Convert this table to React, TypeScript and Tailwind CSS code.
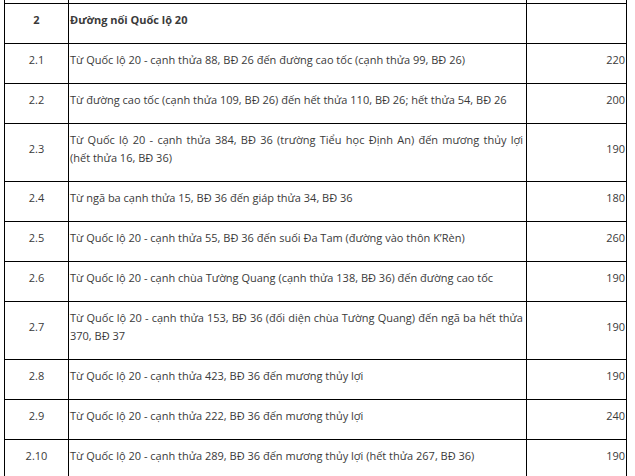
import React from 'react';

type Row = { no: string; lines: string[]; price?: string; bold?: boolean };

const rows: Row[] = [
    { no: '2', lines: ['Đường nối Quốc lộ 20'], bold: true },
    { no: '2.1', lines: ['Từ Quốc lộ 20 - cạnh thửa 88, BĐ 26 đến đường cao tốc (cạnh thửa 99, BĐ 26)'], price: '220' },
    {
        no: '2.2',
        lines: ['Từ đường cao tốc (cạnh thửa 109, BĐ 26) đến hết thửa 110, BĐ 26; hết thửa 54, BĐ 26'],
        price: '200',
    },
    {
        no: '2.3',
        lines: ['Từ Quốc lộ 20 - cạnh thửa 384, BĐ 36 (trường Tiểu học Định An) đến mương thủy lợi', '(hết thửa 16, BĐ 36)'],
        price: '190',
    },
    { no: '2.4', lines: ['Từ ngã ba cạnh thửa 15, BĐ 36 đến giáp thửa 34, BĐ 36'], price: '180' },
    { no: '2.5', lines: ['Từ Quốc lộ 20 - cạnh thửa 55, BĐ 36 đến suối Đa Tam (đường vào thôn K’Rèn)'], price: '260' },
    {
        no: '2.6',
        lines: ['Từ Quốc lộ 20 - cạnh chùa Tường Quang (cạnh thửa 138, BĐ 36) đến đường cao tốc'],
        price: '190',
    },
    {
        no: '2.7',
        lines: ['Từ Quốc lộ 20 - cạnh thửa 153, BĐ 36 (đối diện chùa Tường Quang) đến ngã ba hết thửa', '370, BĐ 37'],
        price: '190',
    },
    { no: '2.8', lines: ['Từ Quốc lộ 20 - cạnh thửa 423, BĐ 36 đến mương thủy lợi'], price: '190' },
    { no: '2.9', lines: ['Từ Quốc lộ 20 - cạnh thửa 222, BĐ 36 đến mương thủy lợi'], price: '240' },
    {
        no: '2.10',
        lines: ['Từ Quốc lộ 20 - cạnh thửa 289, BĐ 36 đến mương thủy lợi (hết thửa 267, BĐ 36)'],
        price: '190',
    },
];

export default function App() {
    return (
        <div className="w-[635px] h-[476px] overflow-hidden bg-white pl-[4px] font-['Open_Sans',sans-serif] text-[11px] leading-[18px] text-[#3a3a3a]">
            <table className="w-[622px] table-fixed border-collapse">
                <colgroup>
                    <col className="w-[64px]" />
                    <col className="w-[458px]" />
                    <col className="w-[100px]" />
                </colgroup>
                <tbody>
                    <tr className="h-[3px]">
                        <td className="border border-t-0 border-black p-0" />
                        <td className="border border-t-0 border-black p-0" />
                        <td className="border border-t-0 border-black p-0" />
                    </tr>
                    {rows.map((r) => (
                        <tr key={r.no}>
                            <td
                                className={`border border-black pt-[7px] pb-[14px] px-[1px] text-center align-middle ${
                                    r.bold ? 'font-bold' : ''
                                }`}
                            >
                                {r.no}
                            </td>
                            <td
                                className={`border border-black pt-[7px] pb-[14px] pl-[1px] pr-[3px] align-middle ${
                                    r.bold ? 'font-bold' : ''
                                }`}
                            >
                                {r.lines.map((line, i) =>
                                    i < r.lines.length - 1 ? (
                                        <div key={i} className="text-justify [text-align-last:justify]">
                                            {line}
                                        </div>
                                    ) : (
                                        <div key={i}>{line}</div>
                                    )
                                )}
                            </td>
                            <td className="border border-black pt-[7px] pb-[14px] px-[1px] text-right align-middle">
                                {r.price}
                            </td>
                        </tr>
                    ))}
                </tbody>
            </table>
        </div>
    );
}
